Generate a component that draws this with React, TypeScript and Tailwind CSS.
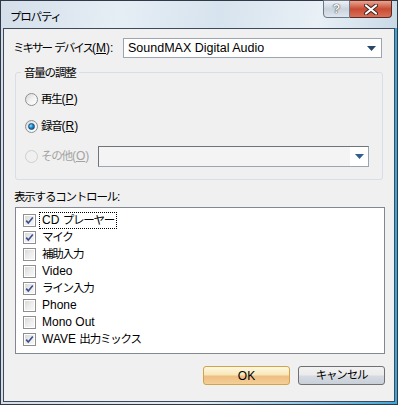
import { FC, ReactNode } from "react";

const font = { fontFamily: '"Liberation Sans", "Noto Sans CJK JP", sans-serif' };

// tighten Japanese runs so they read closer to the narrow system UI font
const jp = (text: string, tight = false): ReactNode =>
  text.split(/([\u3000-\u30ff\u4e00-\u9fff\uff00-\uffef]+)/).map((part, i) =>
    /[\u3000-\u30ff\u4e00-\u9fff\uff00-\uffef]/.test(part) ? (
      <span key={i} className={tight ? "text-[11.5px] tracking-[-2px]" : "text-[11.5px] tracking-[-1.2px]"}>
        {part}
      </span>
    ) : (
      part
    )
  );

const DropArrow: FC<{ dim?: boolean }> = ({ dim }) => (
  <svg width="9" height="5" viewBox="0 0 9 5">
    <path d="M0 0 H9 L4.5 5 Z" fill={dim ? "#2e5f8e" : "#27476a"} />
  </svg>
);

const Radio: FC<{ checked?: boolean; disabled?: boolean; mn: string; pre: string }> = ({ checked, disabled, pre, mn }) => (
  <div className="flex items-center h-[17px] whitespace-nowrap">
    <div
      className={`w-[13px] h-[13px] rounded-full border flex items-center justify-center ${
        disabled
          ? "border-[#cfcfcf] bg-[#f0f0f0]"
          : "border-[#8e8f8f] bg-gradient-to-br from-[#d6d6d6] via-[#f2f2f2] to-[#ffffff]"
      }`}
    >
      {checked && (
        <div className="w-[7px] h-[7px] rounded-full bg-[radial-gradient(circle_at_35%_35%,#8fe0ff_0%,#1a8ad0_45%,#0b3f78_100%)] border border-[#1c4d7a]" />
      )}
    </div>
    <span className={`ml-[3px] text-[12px] ${disabled ? "text-[#a3a3a3]" : "text-black"}`}>
      {jp(pre)}(<span className="underline">{mn}</span>)
    </span>
  </div>
);

const Check: FC<{ checked?: boolean; label: string; focus?: boolean }> = ({ checked, label, focus }) => (
  <div className="flex items-center h-[17px]">
    <div className="w-[13px] h-[13px] border border-[#8f8f8f] bg-white p-[1px]">
      <div className="w-full h-full bg-gradient-to-br from-[#d9d9d9] via-[#ececec] to-[#f7f7f7] flex items-center justify-center">
        {checked && (
          <svg width="9" height="9" viewBox="0 0 9 9">
            <path d="M1.2 4.6 L3.3 7 L7.8 1.4" stroke="#3b4f8f" strokeWidth="1.6" fill="none" />
          </svg>
        )}
      </div>
    </div>
    <span
      className={`ml-[4px] px-[2px] text-[12px] leading-[15px] whitespace-nowrap ${
        focus ? "outline-1 outline-dotted outline-black" : ""
      }`}
    >
      {jp(label)}
    </span>
  </div>
);

const items = [
  { label: "CD プレーヤー", checked: true, focus: true },
  { label: "マイク", checked: true },
  { label: "補助入力", checked: false },
  { label: "Video", checked: false },
  { label: "ライン入力", checked: true },
  { label: "Phone", checked: false },
  { label: "Mono Out", checked: false },
  { label: "WAVE 出力ミックス", checked: true },
];

export default function App() {
  return (
    <div
      style={font}
      className="w-[398px] h-[405px] border border-[#2f3947] bg-gradient-to-r from-[#d2dde8] via-[#e4ecf3] to-[#3aa6d6] flex flex-col px-[2px] pb-[2px]"
    >
      {/* title bar */}
      <div className="h-[27px] flex items-start relative bg-[linear-gradient(100deg,#d4dfea_0%,#e6eef5_30%,#d7e3ee_55%,#e9f0f6_80%,#c9d9e6_100%)] -mx-[2px]">
        <span className="ml-[9px] mt-[7px] text-[12px] text-black">{jp("プロパティ")}</span>
        <div className="ml-auto mr-[5px] flex -mt-[1px]">
          <div className="w-[27px] h-[18px] rounded-bl-[4px] border border-[#6d7786] bg-gradient-to-b from-[#eef2f6] via-[#c9d2dc] to-[#dfe6ee] flex items-center justify-center text-[13px] text-[#f5f7fa] font-bold [text-shadow:0_0_1px_#333,0_0_1px_#333]">
            ?
          </div>
          <div className="w-[42px] h-[18px] rounded-br-[4px] border border-l-0 border-[#5a2b24] bg-gradient-to-b from-[#e8a493] via-[#c74b32] to-[#d97058] flex items-center justify-center">
            <svg width="14" height="11" viewBox="0 0 14 11">
              <path d="M2 1.5 L12 9.5 M12 1.5 L2 9.5" stroke="#3b2620" strokeWidth="4" strokeLinecap="round" />
              <path d="M2 1.5 L12 9.5 M12 1.5 L2 9.5" stroke="#ffffff" strokeWidth="2.2" strokeLinecap="round" />
            </svg>
          </div>
        </div>
      </div>

      {/* client area */}
      <div className="flex-1 border border-[#3e4a5c] bg-[#f0f0f0] text-[12px] text-black pt-[9px] px-[8px]">
        <div className="flex items-center h-[20px]">
          <span className="w-[111px] pl-[1px] whitespace-nowrap">
            {jp("ミキサー デバイス", true)}(<span className="underline">M</span>):
          </span>
          <div className="w-[259px] h-[20px] border border-[#9ca6b3] bg-white flex items-center pl-[4px] pr-[5px]">
            <span className="flex-1 text-[12.5px]">SoundMAX Digital Audio</span>
            <DropArrow />
          </div>
        </div>

        {/* group box */}
        <div className="relative mt-[14px] ml-[3px] w-[368px] h-[108px] border border-[#d5dfe5] rounded-[3px] pt-[18px] pl-[9px] pr-[13px]">
          <span className="absolute -top-[9px] left-[5px] px-[3px] bg-[#f0f0f0] text-[12px]">{jp("音量の調整")}</span>
          <div className="flex flex-col gap-[10px]">
            <Radio pre="再生" mn="P" />
            <Radio pre="録音" mn="R" checked />
            <div className="flex items-center justify-between mt-[1px]">
              <Radio pre="その他" mn="O" disabled />
              <div className="w-[271px] h-[21px] border border-[#6f7478] border-b-[#9aa6b4] border-r-[#9aa6b4] bg-[#f4f4f4] flex items-center justify-end">
                <div className="w-[18px] h-full bg-white flex items-center justify-center">
                  <DropArrow dim />
                </div>
              </div>
            </div>
          </div>
        </div>

        <div className="mt-[9px] ml-[2px] h-[17px] leading-[17px]">{jp("表示するコントロール")}:</div>

        <div className="mt-[1px] ml-[3px] w-[370px] h-[147px] border border-[#828790] bg-white pt-[4px] pl-[7px]">
          {items.map((it) => (
            <Check key={it.label} label={it.label} checked={it.checked} focus={it.focus} />
          ))}
        </div>

        <div className="flex justify-end gap-[8px] mt-[12px] pr-[1px]">
          <div className="w-[87px] h-[19px] rounded-[3px] border border-[#d2a349] bg-[linear-gradient(#fdf8e2_0%,#f8e7b5_48%,#eebd82_52%,#f3cf96_100%)] flex items-center justify-center text-[12px]">
            OK
          </div>
          <div className="w-[87px] h-[19px] rounded-[3px] border border-[#707070] bg-[linear-gradient(#f2f2f2_0%,#ebebeb_48%,#d6dbe2_52%,#c9cfd7_100%)] flex items-center justify-center text-[12px]">
            {jp("キャンセル")}
          </div>
        </div>
      </div>
    </div>
  );
}
